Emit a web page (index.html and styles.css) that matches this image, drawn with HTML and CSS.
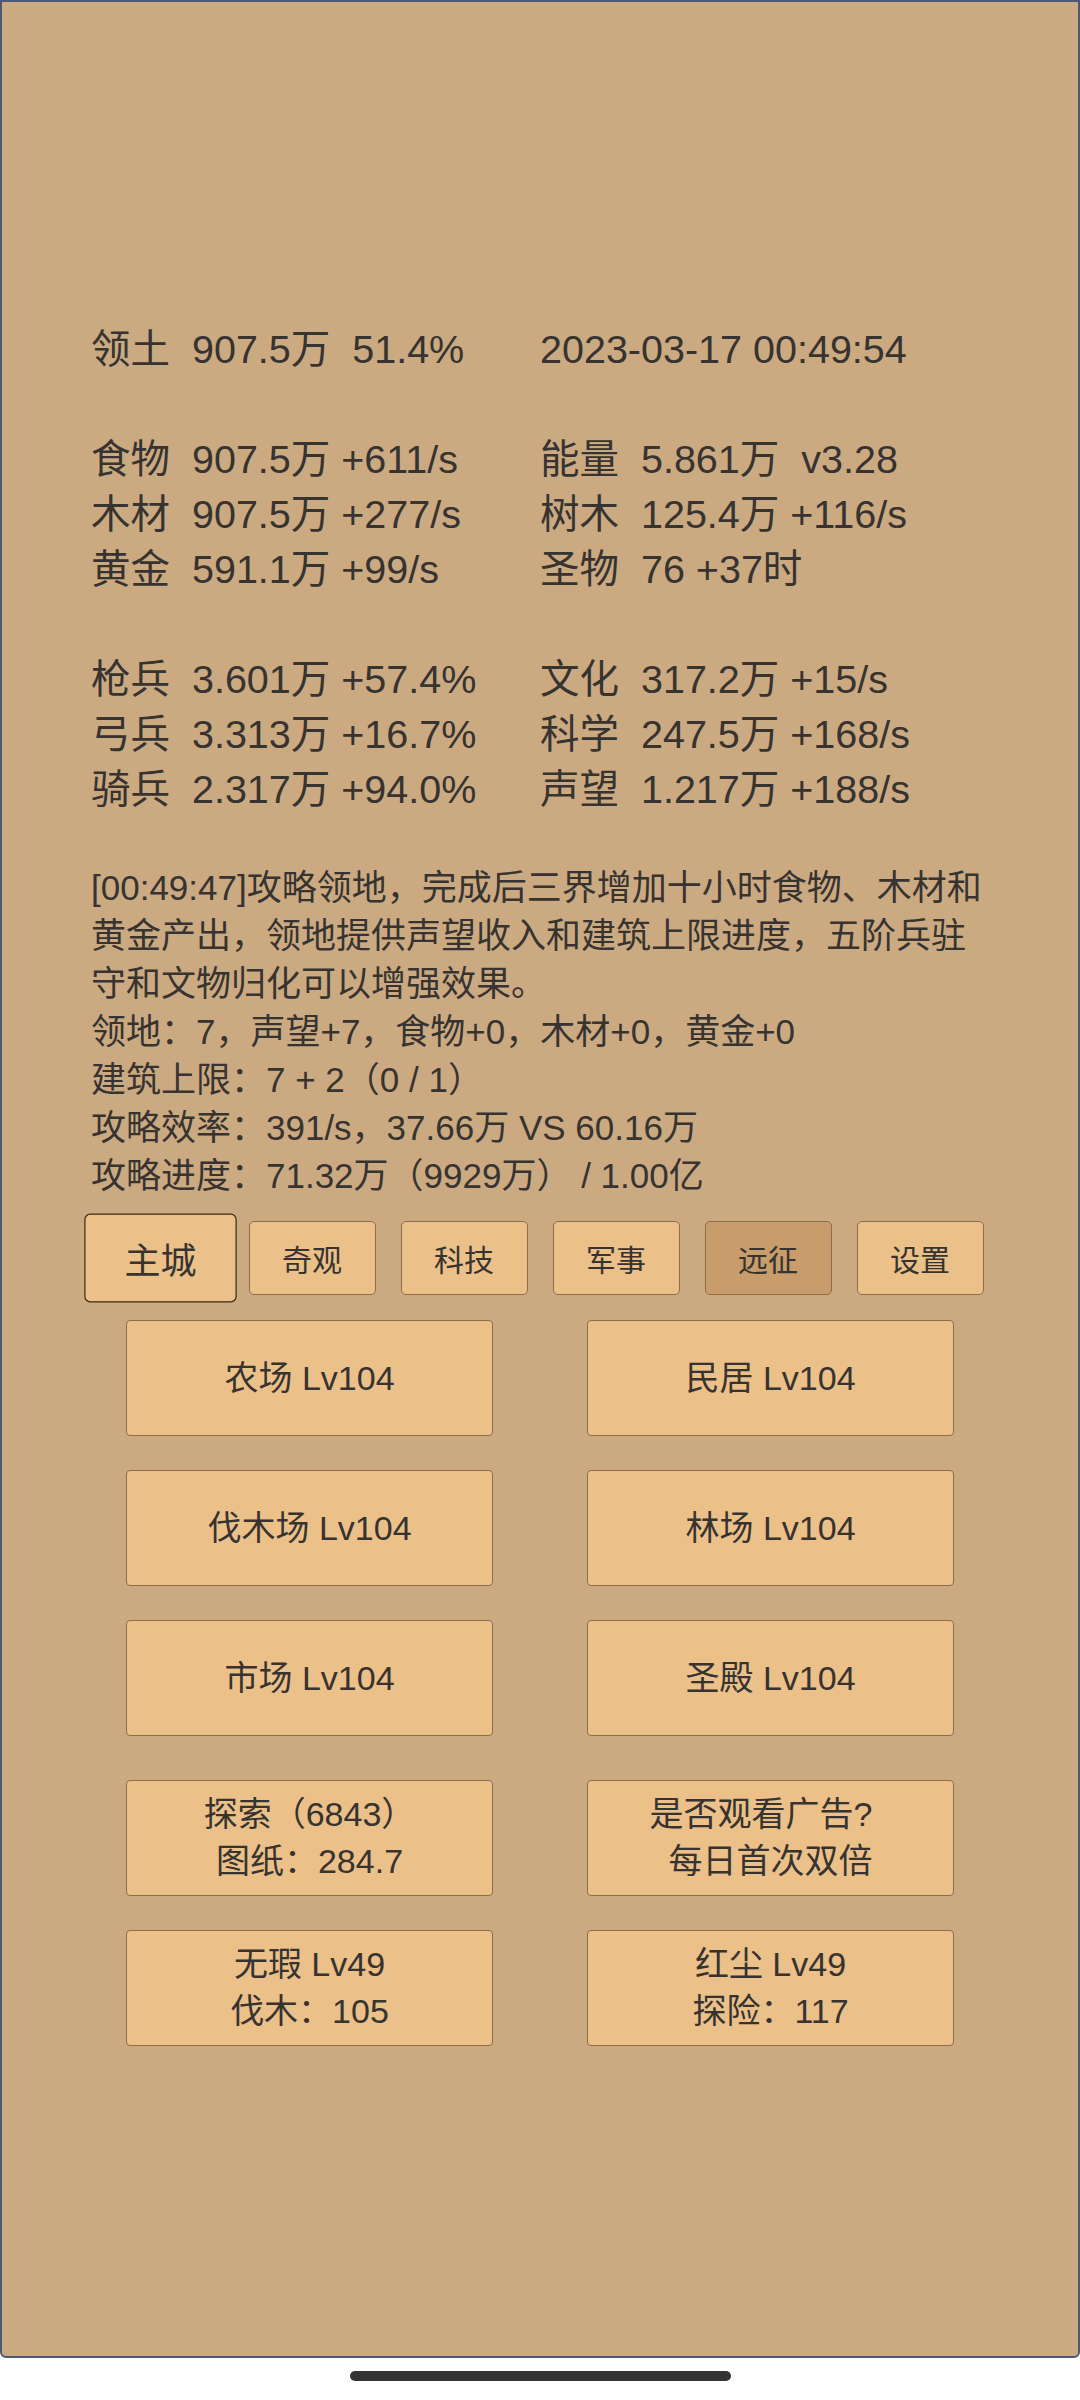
FILE: index.html
```html
<!DOCTYPE html>
<html lang="zh-CN">
<head>
<meta charset="UTF-8">
<title>三界 - 主城</title>
<link rel="stylesheet" href="styles.css">
</head>
<body>

<div class="screen">
  <div class="stats">
    <div class="row">
      <div class="cell">领土  907.5万  51.4%</div>
      <div class="cell">2023-03-17 00:49:54</div>
    </div>

    <div class="group">
      <div class="row">
        <div class="cell">食物  907.5万 +611/s</div>
        <div class="cell">能量  5.861万  v3.28</div>
      </div>
      <div class="row">
        <div class="cell">木材  907.5万 +277/s</div>
        <div class="cell">树木  125.4万 +116/s</div>
      </div>
      <div class="row">
        <div class="cell">黄金  591.1万 +99/s</div>
        <div class="cell">圣物  76 +37时</div>
      </div>
    </div>

    <div class="group">
      <div class="row">
        <div class="cell">枪兵  3.601万 +57.4%</div>
        <div class="cell">文化  317.2万 +15/s</div>
      </div>
      <div class="row">
        <div class="cell">弓兵  3.313万 +16.7%</div>
        <div class="cell">科学  247.5万 +168/s</div>
      </div>
      <div class="row">
        <div class="cell">骑兵  2.317万 +94.0%</div>
        <div class="cell">声望  1.217万 +188/s</div>
      </div>
    </div>
  </div>

  <div class="log">
    <p>[00:49:47]攻略领地，完成后三界增加十小时食物、木材和黄金产出，领地提供声望收入和建筑上限进度，五阶兵驻守和文物归化可以增强效果。</p>
    <p>领地：7，声望+7，食物+0，木材+0，黄金+0</p>
    <p>建筑上限：7 + 2（0 / 1）</p>
    <p>攻略效率：391/s，37.66万 VS 60.16万</p>
    <p>攻略进度：71.32万（9929万） / 1.00亿</p>
  </div>

  <div class="tabs">
    <button class="tab active">主城</button>
    <button class="tab">奇观</button>
    <button class="tab">科技</button>
    <button class="tab">军事</button>
    <button class="tab dim">远征</button>
    <button class="tab">设置</button>
  </div>

  <div class="buildings">
    <button class="bld">农场 Lv104</button>
    <button class="bld">民居 Lv104</button>
    <button class="bld">伐木场 Lv104</button>
    <button class="bld">林场 Lv104</button>
    <button class="bld">市场 Lv104</button>
    <button class="bld">圣殿 Lv104</button>
  </div>

  <div class="buildings extra">
    <button class="bld">探索（6843）<br>图纸：284.7</button>
    <button class="bld">是否观看广告?&nbsp;&nbsp;<br>每日首次双倍</button>
    <button class="bld">无瑕 Lv49<br>伐木：105</button>
    <button class="bld">红尘 Lv49<br>探险：117</button>
  </div>
</div>

<div class="home">
  <div class="home-bar"></div>
</div>

</body>
</html>
```

FILE: styles.css
```css
* { box-sizing: border-box; }

body {
  margin: 0;
  background: #fff;
  color: #363330;
  font-family: "Liberation Sans", "Noto Sans CJK SC", sans-serif;
}

.screen {
  height: 2358px;
  padding: 320px 89px 0;
  background: #cbaa82;
  border: 2px solid #4c5875;
  border-radius: 0 0 6px 6px;
}

.stats {
  font-size: 39.5px;
  line-height: 55px;
}
.row {
  display: grid;
  grid-template-columns: 449px 449px;
}
.cell { white-space: pre; }
.group { margin-top: 55px; }

.log {
  margin-top: 47px;
  font-size: 35px;
  line-height: 48px;
}
.log p { margin: 0; }

.tabs {
  display: flex;
  justify-content: center;
  gap: 25px;
  margin-top: 21px;
}
.tab {
  width: 127px;
  height: 74px;
  padding: 0;
  font-family: inherit;
  font-size: 30px;
  color: #363330;
  background: #ebc089;
  border: 1px solid #8d6d4a;
  border-radius: 5px;
}
.tab.active {
  transform: scale(1.2);
  border-color: #3a2a18;
}
.tab.dim { background: #c99d6b; }

.buildings {
  display: grid;
  grid-template-columns: 367px 367px;
  grid-auto-rows: 116px;
  justify-content: center;
  column-gap: 94px;
  row-gap: 34px;
  margin-top: 25px;
}
.buildings.extra { margin-top: 44px; }
.bld {
  padding: 0;
  font-family: inherit;
  font-size: 34px;
  line-height: 47px;
  color: #363330;
  background: #ebc089;
  border: 1px solid #8d6d4a;
  border-radius: 4px;
}

.home {
  height: 42px;
  padding-top: 13px;
}
.home-bar {
  width: 381px;
  height: 10px;
  margin: 0 auto;
  background: #333;
  border-radius: 5px;
}
```
